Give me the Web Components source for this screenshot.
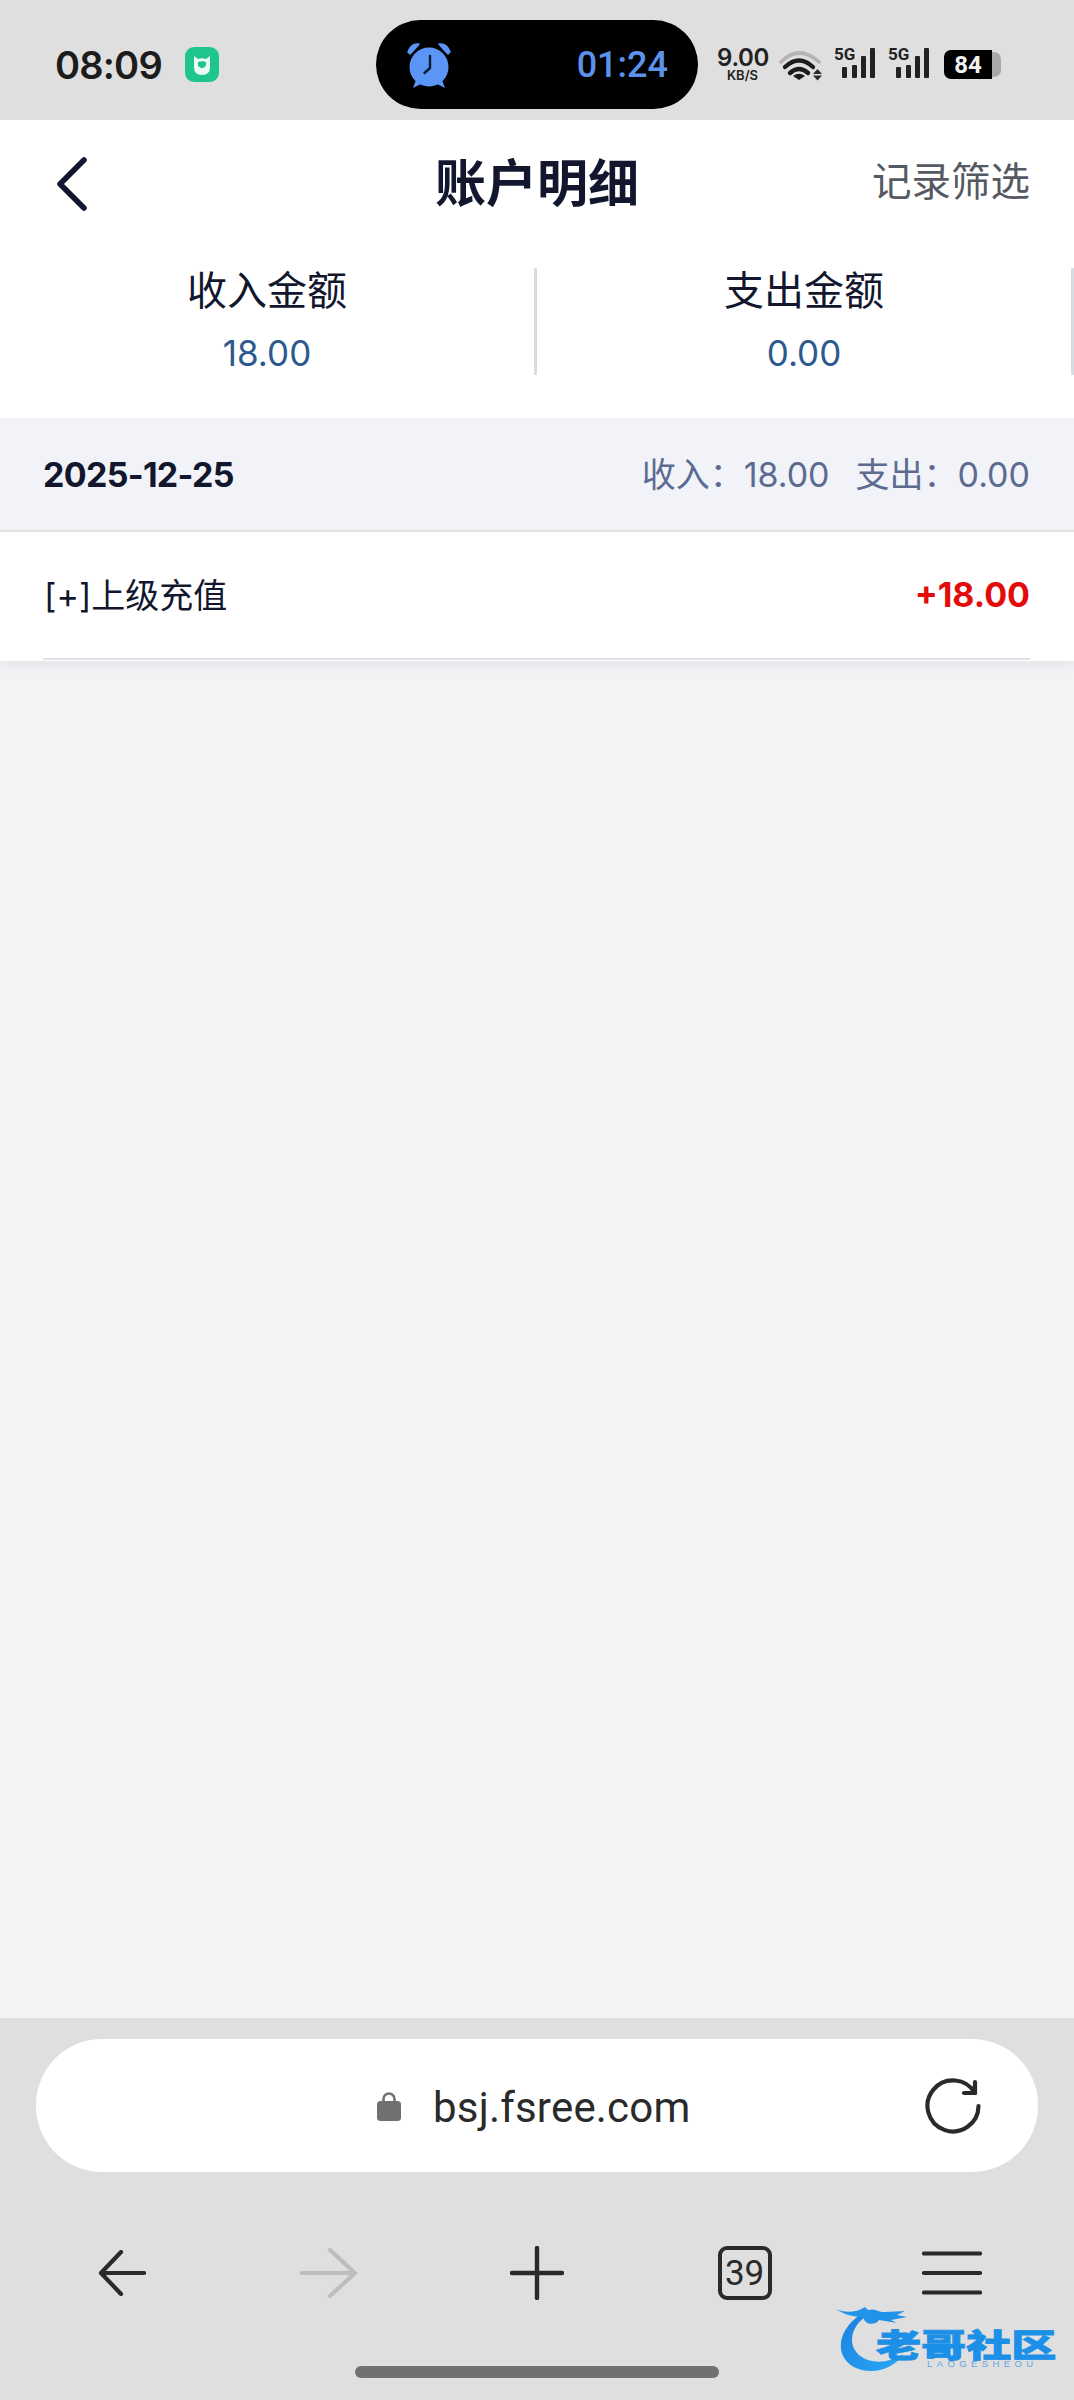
<!DOCTYPE html>
<html lang="zh">
<head>
<meta charset="utf-8">
<title>账户明细</title>
<style>
  html, body { margin: 0; padding: 0; }
  body {
    width: 1074px;
    height: 2400px;
    display: flex;
    flex-direction: column;
    background: #f2f3f5;
    font-family: Inter, "Noto Sans CJK SC", sans-serif;
    color: #12172e;
    overflow: hidden;
  }
  main { flex: 1; display: block; background: #f2f3f5; }
</style>
</head>
<body>
  <status-bar></status-bar>
  <nav-bar title="账户明细" action="记录筛选"></nav-bar>
  <summary-panel>
    <summary-col label="收入金额" value="18.00"></summary-col>
    <summary-col label="支出金额" value="0.00"></summary-col>
  </summary-panel>
  <day-header date="2025-12-25" income="18.00" expense="0.00"></day-header>
  <record-row label="[+]上级充值" amount="+18.00"></record-row>
  <main></main>
  <browser-bar url="bsj.fsree.com" tabs="39"></browser-bar>

<script>
class StatusBar extends HTMLElement {
  constructor () {
    super()
    this.shadow = this.attachShadow({ mode: 'open' })
  }

  connectedCallback () {
    const signal = `
      <svg width="41" height="32" viewBox="0 0 41 32" overflow="visible">
        <text x="0" y="13" font-family="Roboto, sans-serif" font-weight="700" font-size="17" fill="#222">5G</text>
        <rect x="8" y="20" width="5" height="11" rx="1" fill="#222"/>
        <rect x="18" y="18" width="5" height="13" rx="1" fill="#222"/>
        <rect x="27" y="9" width="5" height="22" rx="1" fill="#222"/>
        <rect x="36" y="1" width="5" height="30" rx="1" fill="#222"/>
      </svg>`

    this.shadow.innerHTML = /* html */`
      <style>
        :host {
          display: flex;
          align-items: center;
          height: 120px;
          padding: 9px 0 0 55px;
          box-sizing: border-box;
          background: #dfdfdf;
          flex: none;
        }
        .time {
          width: 105px;
          font: 600 38px Inter, sans-serif;
          letter-spacing: -.8px;
          color: #1c1c1c;
          white-space: nowrap;
        }
        .app { margin-left: 25px; width: 34px; height: 35px; display: block; }
        .pill {
          margin-left: 157px;
          width: 322px;
          height: 89px;
          border-radius: 45px;
          background: #000;
          display: flex;
          align-items: center;
          justify-content: space-between;
          padding: 0 30px;
          box-sizing: border-box;
          font: 500 36px Roboto, sans-serif;
          color: #5b93ea;
        }
        .pill svg { display: block; }
        .right { margin-left: 19px; display: flex; align-items: center; }
        .speed {
          width: 51px;
          text-align: center;
          color: #222;
          font-family: Inter, sans-serif;
          font-weight: 600;
        }
        .speed b { display: block; font-size: 24px; line-height: 20px; font-weight: 600; letter-spacing: -.3px; }
        .speed i { display: block; font-style: normal; font-size: 13px; line-height: 12px; margin-top: 1px; }
        .wifi { margin-left: 11px; display: block; }
        .sig { margin-left: 12px; display: block; }
        .sig + .sig { margin-left: 13px; }
        .battery {
          margin-left: 15px;
          width: 48px;
          height: 29px;
          background: #000;
          border-radius: 7px 0 0 7px;
          display: flex;
          align-items: center;
          justify-content: center;
          font: 700 24px Roboto, sans-serif;
          color: #f2f2f2;
        }
        .cap { width: 9px; height: 29px; background: #a9a9a9; clip-path: inset(2px 0 2px 0 round 0 7px 7px 0); }
      </style>
      <span class="time">08:09</span>
      <svg class="app" viewBox="0 0 34 35">
        <rect width="34" height="35" rx="9" fill="#1fc68c"/>
        <path d="M9 9 L13 12 Q17 10.5 21 12 L25 9 V20 Q25 28 17 28 Q9 28 9 20Z" fill="#eafaf4"/>
        <path d="M13 15 Q17 13.5 21 15 V19 L17 21.5 L13 19Z" fill="#1fc68c"/>
      </svg>
      <div class="pill">
        <svg width="46" height="48" viewBox="0 0 46 48">
          <circle cx="23" cy="26" r="19.5" fill="#5b96f7"/>
          <path d="M2 11 Q5 2 13 3 Q9 8 4 13Z M44 11 Q41 2 33 3 Q37 8 42 13Z" fill="#5b96f7" stroke="#5b96f7" stroke-width="1.5" stroke-linejoin="round"/>
          <path d="M10 39 L7 47 L15 43Z M36 39 L39 47 L31 43Z" fill="#5b96f7"/>
          <path d="M24 15 V27 L18.5 32" fill="none" stroke="#0b1a33" stroke-width="2.4" stroke-linecap="round" stroke-linejoin="round"/>
        </svg>
        <span>01:24</span>
      </div>
      <div class="right">
        <div class="speed"><b>9.00</b><i>KB/S</i></div>
        <svg class="wifi" width="43" height="32" viewBox="0 0 43 32">
          <path d="M2 13 Q20 -5 40 13" fill="none" stroke="#b4b4b4" stroke-width="3.6" stroke-linecap="round"/>
          <path d="M6 18 Q20 5 34 18" fill="none" stroke="#1c1c1c" stroke-width="4.4" stroke-linecap="round"/>
          <path d="M11 24 Q20 16 29 24" fill="none" stroke="#1c1c1c" stroke-width="4.4" stroke-linecap="round"/>
          <path d="M14 27 Q20 22.5 26 27 L20 31Z" fill="#1c1c1c"/>
          <path d="M38.5 20 L43 25 H34Z M34 26.5 H43 L38.5 31.5Z" fill="#2a2a2a"/>
        </svg>
        <span class="sig">${signal}</span>
        <span class="sig">${signal}</span>
        <span class="battery">84</span>
        <span class="cap"></span>
      </div>
    `
  }
}

class NavBar extends HTMLElement {
  constructor () {
    super()
    this.shadow = this.attachShadow({ mode: 'open' })
  }

  connectedCallback () {
    this.shadow.innerHTML = /* html */`
      <style>
        :host {
          display: grid;
          grid-template-columns: 1fr auto 1fr;
          align-items: center;
          height: 124px;
          padding: 4px 44px 0;
          box-sizing: border-box;
          background: #fff;
          flex: none;
          font-family: Inter, "Noto Sans CJK SC", sans-serif;
        }
        svg { display: block; margin-left: 10px; }
        h1 {
          margin: 0;
          font-size: 51px;
          font-weight: 700;
          color: #12172e;
          line-height: 60px;
        }
        .action {
          justify-self: end;
          font-size: 39.5px;
          color: #555962;
          line-height: 50px;
          margin-top: -4px;
        }
      </style>
      <svg width="36" height="56" viewBox="0 0 36 56">
        <path d="M30 4 L6 28 L30 52" fill="none" stroke="#12172e" stroke-width="5.6" stroke-linecap="round" stroke-linejoin="round"/>
      </svg>
      <h1>${this.getAttribute('title')}</h1>
      <span class="action">${this.getAttribute('action')}</span>
    `
  }
}

class SummaryPanel extends HTMLElement {
  constructor () {
    super()
    this.shadow = this.attachShadow({ mode: 'open' })
  }

  connectedCallback () {
    this.shadow.innerHTML = /* html */`
      <style>
        :host {
          display: grid;
          grid-template-columns: 537px 537px;
          padding: 24px 0 43px;
          background: #fff;
          flex: none;
        }
      </style>
      <slot></slot>
    `
  }
}

class SummaryCol extends HTMLElement {
  constructor () {
    super()
    this.shadow = this.attachShadow({ mode: 'open' })
  }

  connectedCallback () {
    this.shadow.innerHTML = /* html */`
      <style>
        :host {
          display: flex;
          flex-direction: column;
          align-items: center;
          height: 107px;
          border-right: 3px solid #d6dde2;
          font-family: Inter, "Noto Sans CJK SC", sans-serif;
        }
        .label { font-size: 40px; line-height: 50px; color: #12172e; margin-top: -2px; }
        .value { font-size: 35px; line-height: 44px; color: #2c5a8f; margin-top: 15px; }
      </style>
      <span class="label">${this.getAttribute('label')}</span>
      <span class="value">${this.getAttribute('value')}</span>
    `
  }
}

class DayHeader extends HTMLElement {
  constructor () {
    super()
    this.shadow = this.attachShadow({ mode: 'open' })
  }

  connectedCallback () {
    this.shadow.innerHTML = /* html */`
      <style>
        :host {
          display: flex;
          align-items: center;
          justify-content: space-between;
          height: 114px;
          padding: 0 44px 0 43px;
          box-sizing: border-box;
          background: #f1f3f8;
          border-bottom: 2px solid #e3e4e6;
          flex: none;
          font-family: Inter, "Noto Sans CJK SC", sans-serif;
          font-size: 34px;
        }
        .date { font-weight: 700; color: #12172e; letter-spacing: -.7px; }
        .totals { display: flex; gap: 26px; color: #5c6b90; margin-top: -3px; }
      </style>
      <span class="date">${this.getAttribute('date')}</span>
      <div class="totals">
        <span>收入：${this.getAttribute('income')}</span>
        <span>支出：${this.getAttribute('expense')}</span>
      </div>
    `
  }
}

class RecordRow extends HTMLElement {
  constructor () {
    super()
    this.shadow = this.attachShadow({ mode: 'open' })
  }

  connectedCallback () {
    this.shadow.innerHTML = /* html */`
      <style>
        :host {
          display: block;
          padding: 0 44px 1px 43px;
          background: #fff;
          box-shadow: 0 4px 10px rgba(40, 44, 70, .07);
          flex: none;
          position: relative;
          font-family: Inter, "Noto Sans CJK SC", sans-serif;
        }
        .row {
          display: flex;
          align-items: center;
          justify-content: space-between;
          height: 126px;
          border-bottom: 2px solid #e1e2e6;
        }
        .label { font-size: 34px; color: #12172e; margin: -3px 0 0 1px; }
        .amount { font-size: 34px; font-weight: 700; color: #e30b0b; margin-top: -2px; }
      </style>
      <div class="row">
        <span class="label">${this.getAttribute('label')}</span>
        <span class="amount">${this.getAttribute('amount')}</span>
      </div>
    `
  }
}

class BrowserBar extends HTMLElement {
  constructor () {
    super()
    this.shadow = this.attachShadow({ mode: 'open' })
  }

  connectedCallback () {
    this.shadow.innerHTML = /* html */`
      <style>
        :host {
          display: block;
          position: relative;
          height: 382px;
          padding-top: 21px;
          box-sizing: border-box;
          background: #dfdfdf;
          flex: none;
          font-family: Roboto, sans-serif;
        }
        svg { display: block; }
        .url {
          margin: 0 36px;
          height: 133px;
          border-radius: 66px;
          background: #fff;
          display: flex;
          align-items: center;
          padding-left: 341px;
          padding-right: 57px;
          box-sizing: border-box;
        }
        .host { margin: 4px 0 0 32px; font-size: 42px; color: #2a2a2a; letter-spacing: .2px; }
        .reload { margin-left: auto; }
        .tools {
          display: grid;
          grid-template-columns: repeat(5, 1fr);
          justify-items: center;
          align-items: center;
          height: 56px;
          margin-top: 73px;
          padding: 0 18px;
        }
        .tab {
          width: 54px;
          height: 54px;
          box-sizing: border-box;
          border: 4px solid #2a2a2a;
          border-radius: 9px;
          display: flex;
          align-items: center;
          justify-content: center;
          font-size: 35px;
          color: #2a2a2a;
        }
        .home {
          width: 364px;
          height: 12px;
          margin: 65px auto 0;
          border-radius: 6px;
          background: #717171;
        }
      </style>
      <div class="url">
        <svg width="24" height="30" viewBox="0 0 24 30">
          <path d="M6.5 11 V8 a5.5 5.5 0 0 1 11 0 V11" fill="none" stroke="#707070" stroke-width="2.6"/>
          <rect x="0" y="10" width="24" height="20" rx="3.5" fill="#707070"/>
        </svg>
        <span class="host">${this.getAttribute('url')}</span>
        <svg class="reload" width="56" height="56" viewBox="0 0 56 56">
          <path d="M50 15 A25.5 25.5 0 1 0 53.5 28" fill="none" stroke="#2a2a2a" stroke-width="4.2" stroke-linecap="round"/>
          <path d="M50 4 V15 H39" fill="none" stroke="#2a2a2a" stroke-width="4.2" stroke-linecap="round" stroke-linejoin="round"/>
        </svg>
      </div>
      <div class="tools">
        <svg width="48" height="46" viewBox="0 0 48 46">
          <path d="M46 23 H3 M23 2 L3 23 L23 44" fill="none" stroke="#2a2a2a" stroke-width="4.2" stroke-linecap="round" stroke-linejoin="round"/>
        </svg>
        <svg width="58" height="50" viewBox="0 0 58 50">
          <path d="M2 25 H55 M30 2 L55 25 L30 48" fill="none" stroke="#bdbdbd" stroke-width="4.2" stroke-linecap="round" stroke-linejoin="round"/>
        </svg>
        <svg width="54" height="54" viewBox="0 0 54 54">
          <path d="M2 27 H52 M27 2 V52" fill="none" stroke="#2a2a2a" stroke-width="4.4" stroke-linecap="round"/>
        </svg>
        <span class="tab">39</span>
        <svg width="60" height="44" viewBox="0 0 60 44">
          <path d="M2 2.5 H58 M2 22 H58 M2 41.5 H58" fill="none" stroke="#2a2a2a" stroke-width="4.2" stroke-linecap="round"/>
        </svg>
      </div>
      <div class="home"></div>
      <site-watermark></site-watermark>
    `
  }
}

class SiteWatermark extends HTMLElement {
  constructor () {
    super()
    this.shadow = this.attachShadow({ mode: 'open' })
  }

  connectedCallback () {
    this.shadow.innerHTML = /* html */`
      <style>
        :host {
          display: block;
          position: absolute;
          left: 835px;
          top: 286px;
          width: 224px;
          height: 70px;
        }
        svg { display: block; position: absolute; left: 0; top: 0; }
        .name {
          position: absolute;
          left: 41px;
          top: 23px;
          font: 900 32px/32px "Noto Sans CJK SC", sans-serif;
          color: #1c8fe6;
          -webkit-text-stroke: .8px #1c8fe6;
          white-space: nowrap;
          transform: scaleX(1.41);
          transform-origin: left center;
        }
        .latin {
          position: absolute;
          left: 92px;
          top: 54px;
          font: 400 9.5px/11px "Liberation Sans", sans-serif;
          letter-spacing: 4.4px;
          color: #5fa4dc;
          white-space: nowrap;
        }
      </style>
      <svg width="224" height="70" viewBox="0 0 224 70">
        <defs>
          <linearGradient id="arc" x1="0" y1="0" x2="1" y2="1">
            <stop offset="0" stop-color="#1b7fe0"/>
            <stop offset="1" stop-color="#2aa8f5"/>
          </linearGradient>
        </defs>
        <path d="M26 10 C-6 32 2 66 36 67 C50 67 62 60 68 50 C54 59 36 61 24 51 C13 41 15 24 30 13Z" fill="url(#arc)"/>
        <path d="M1 5 C10 9 20 9 30 3 L33 6 C40 4 42 8 50 8 L70 7 L62 11 L72 13 L56 16 L62 19 L44 16 C40 22 30 21 28 13 C18 13 8 10 1 5Z" fill="#2194ea"/>
      </svg>
      <span class="name">老哥社区</span>
      <span class="latin">LAOGESHEOU</span>
    `
  }
}

customElements.define('status-bar', StatusBar)
customElements.define('nav-bar', NavBar)
customElements.define('summary-panel', SummaryPanel)
customElements.define('summary-col', SummaryCol)
customElements.define('day-header', DayHeader)
customElements.define('record-row', RecordRow)
customElements.define('browser-bar', BrowserBar)
customElements.define('site-watermark', SiteWatermark)
</script>
</body>
</html>
